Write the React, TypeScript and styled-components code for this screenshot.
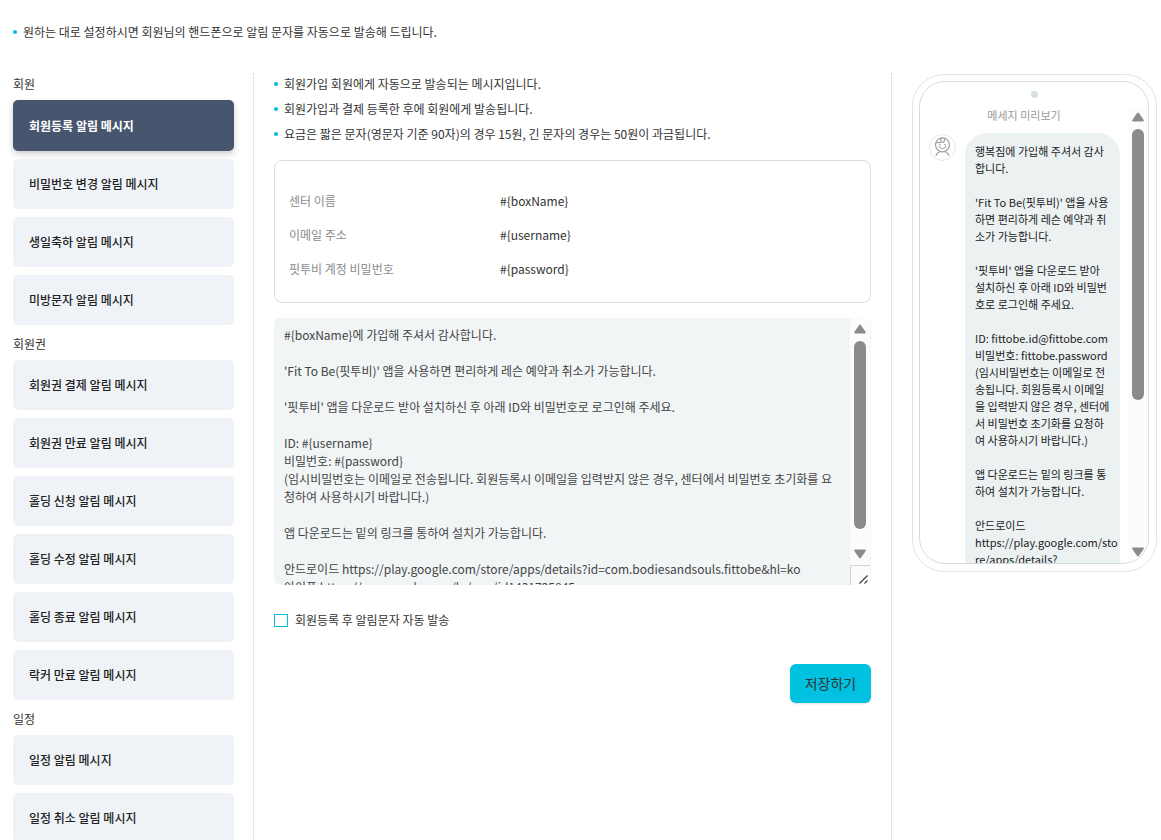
import React from 'react';
import styled, { createGlobalStyle, css } from 'styled-components';

const GlobalStyle = createGlobalStyle`
  * { box-sizing: border-box; }
  body {
    margin: 0;
    background: #fff;
    color: #333;
    font-family: 'Noto Sans CJK KR', 'Noto Sans', sans-serif;
    font-size: 12px;
    line-height: 18px;
  }
  button, input, textarea { font: inherit; color: inherit; }
`;

const Page = styled.main`
  height: 100vh;
  overflow: hidden;
  display: flex;
  flex-direction: column;
  padding: 23px 4px 0 13px;
`;

const Notes = styled.ul`
  list-style: none;
  margin: 0;
  padding: 0;
  display: flex;
  flex-direction: column;
  gap: 7px;
`;

const Note = styled.li`
  display: flex;
  align-items: center;
  gap: 6px;
  &::before {
    content: '';
    width: 4px;
    height: 4px;
    border-radius: 2px;
    background: #00bfdf;
  }
`;

const Columns = styled.div`
  flex: 1;
  min-height: 0;
  margin-top: 32px;
  display: grid;
  grid-template-columns: 241px minmax(0, 1fr) 265px;
`;

const Sidebar = styled.nav`
  padding-right: 19px;
  border-right: 1px dotted #d0d0d0;
`;

const Group = styled.section`
  display: flex;
  flex-direction: column;
  gap: 8px;
  padding-bottom: 8px;
`;

const GroupTitle = styled.h2`
  margin: 0 0 -3px;
  font-size: 12px;
  font-weight: 400;
  line-height: 22px;
`;

const MenuButton = styled.button<{ $active?: boolean }>`
  height: 50px;
  flex-shrink: 0;
  padding: 0 16px;
  border: 0;
  border-radius: 5px;
  background: #eff3f8;
  color: #222;
  font-weight: 500;
  text-align: left;
  cursor: pointer;
  ${(p) =>
    p.$active &&
    css`
      height: 51px;
      background: #47566e;
      color: #fff;
      font-weight: 700;
      box-shadow: 0 3px 6px rgba(0, 0, 0, 0.2);
    `}
`;

const Editor = styled.form`
  padding: 2px 20px 0;
  border-right: 1px dotted #d0d0d0;
  display: flex;
  flex-direction: column;
`;

const Variables = styled.dl`
  margin: 17px 0 15px;
  padding: 31px 14px 24px;
  border: 1px solid #d7e0e6;
  border-radius: 8px;
  display: grid;
  grid-template-columns: 211px 1fr;
  row-gap: 16px;
`;

const VariableName = styled.dt`
  color: #8c8c8c;
`;

const VariableValue = styled.dd`
  margin: 0;
`;

const MessageBox = styled.div`
  height: 267px;
  display: flex;
  border-radius: 6px;
  overflow: hidden;
  background: #f1f5f6;
  border-right: 1px solid #f1f5f6;
`;

const MessageInput = styled.textarea`
  flex: 1;
  min-width: 0;
  padding: 8px 10px 0;
  border: 0;
  outline: 0;
  resize: none;
  overflow: hidden;
  background: transparent;
  color: #444;
  line-height: 18px;
`;

const ScrollTrack = styled.div`
  width: 20px;
  flex-shrink: 0;
  display: flex;
  flex-direction: column;
  align-items: center;
  background: #fcfcfc;
`;

const ScrollThumb = styled.div<{ $length: number }>`
  width: 12px;
  height: ${(p) => p.$length}px;
  margin: 7px 0 auto;
  border-radius: 6px;
  background: #8b8b8b;
`;

const ScrollArrow = styled.svg`
  width: 12px;
  height: 10px;
  margin: 6px 0;
  flex-shrink: 0;
  fill: #8b8b8b;

  &:first-child {
    margin-bottom: 0;
  }
`;

const ResizeCorner = styled.svg`
  width: 20px;
  height: 20px;
  flex-shrink: 0;
`;

const CheckLabel = styled.label`
  margin-top: 26px;
  display: flex;
  align-items: center;
  gap: 7px;
`;

const Checkbox = styled.input`
  appearance: none;
  width: 14px;
  height: 13px;
  margin: 0;
  border: 1px solid #00bfdf;
  background: #fff;
`;

const SaveButton = styled.button`
  align-self: flex-end;
  width: 81px;
  height: 39px;
  margin-top: 35px;
  padding: 0 0 2px;
  border: 0;
  border-radius: 6px;
  background: #00c1e0;
  color: #333;
  font-size: 14px;
  box-shadow: 0 1px 2px rgba(0, 0, 0, 0.12);
  cursor: pointer;
`;

const PreviewColumn = styled.aside`
  padding: 1px 0 0 20px;
`;

const Phone = styled.div`
  height: 498px;
  padding: 6px 7px 7px 6px;
  border: 1px solid #dfe6e9;
  border-radius: 32px;
  display: flex;
`;

const Screen = styled.div`
  flex: 1;
  min-width: 0;
  border: 1px solid #d3dde1;
  border-radius: 26px;
  overflow: hidden;
  display: flex;
  flex-direction: column;
`;

const Camera = styled.div`
  width: 7px;
  height: 7px;
  margin: 9px auto 8px;
  flex-shrink: 0;
  border-radius: 50%;
  background: #d7e0e4;
`;

const ScreenBody = styled.div`
  flex: 1;
  min-height: 0;
  display: flex;
`;

const Conversation = styled.div`
  flex: 1;
  min-width: 0;
  overflow: hidden;
`;

const PreviewTitle = styled.h2`
  margin: 0 0 9px;
  color: #999;
  font-size: 11px;
  font-weight: 400;
  line-height: 18px;
  text-align: center;
`;

const MessageRow = styled.div`
  display: flex;
  align-items: flex-start;
  gap: 9px;
  padding: 0 8px 0 9px;
`;

const Avatar = styled.svg`
  width: 27px;
  height: 27px;
  margin-top: 1px;
  flex-shrink: 0;
`;

const Bubble = styled.p`
  flex: 1;
  min-width: 0;
  margin: 0;
  padding: 10px;
  border-radius: 22px;
  background: #ecf1f2;
  color: #222;
  font-size: 11px;
  line-height: 17px;
  white-space: pre-wrap;
  overflow-wrap: anywhere;
`;

const Address = styled.span`
  white-space: pre;
`;

const groups = [
  {
    title: '회원',
    items: ['회원등록 알림 메시지', '비밀번호 변경 알림 메시지', '생일축하 알림 메시지', '미방문자 알림 메시지'],
  },
  {
    title: '회원권',
    items: [
      '회원권 결제 알림 메시지',
      '회원권 만료 알림 메시지',
      '홀딩 신청 알림 메시지',
      '홀딩 수정 알림 메시지',
      '홀딩 종료 알림 메시지',
      '락커 만료 알림 메시지',
    ],
  },
  { title: '일정', items: ['일정 알림 메시지', '일정 취소 알림 메시지'] },
];

const variables = [
  ['센터 이름', '#{boxName}'],
  ['이메일 주소', '#{username}'],
  ['핏투비 계정 비밀번호', '#{password}'],
];

const buildMessage = (center: string, id: string, password: string) =>
  `${center}에 가입해 주셔서 감사합니다.

'Fit To Be(핏투비)' 앱을 사용하면 편리하게 레슨 예약과 취소가 가능합니다.

'핏투비' 앱을 다운로드 받아 설치하신 후 아래 ID와 비밀번호로 로그인해 주세요.

ID: ${id}
비밀번호: ${password}
(임시비밀번호는 이메일로 전송됩니다. 회원등록시 이메일을 입력받지 않은 경우, 센터에서 비밀번호 초기화를 요청하여 사용하시기 바랍니다.)

앱 다운로드는 밑의 링크를 통하여 설치가 가능합니다.

안드로이드`;

const links = ` https://play.google.com/store/apps/details?id=com.bodiesandsouls.fittobe&hl=ko
아이폰 https://apps.apple.com/kr/app/id1431725845`;

function ScrollBar({ length, children }: { length: number; children?: React.ReactNode }) {
  return (
    <ScrollTrack aria-hidden="true">
      <ScrollArrow viewBox="0 0 12 10">
        <path d="M5 1.2Q6 0 7 1.2L11.7 8Q12.2 9.5 11 9.5H1Q-.2 9.5.3 8Z" />
      </ScrollArrow>
      <ScrollThumb $length={length} />
      <ScrollArrow viewBox="0 0 12 10">
        <path d="M5 8.8Q6 10 7 8.8L11.7 2Q12.2.5 11 .5H1Q-.2.5.3 2Z" />
      </ScrollArrow>
      {children}
    </ScrollTrack>
  );
}

export default function App() {
  return (
    <>
      <GlobalStyle />
      <Page>
        <Notes>
          <Note>원하는 대로 설정하시면 회원님의 핸드폰으로 알림 문자를 자동으로 발송해 드립니다.</Note>
        </Notes>
        <Columns>
          <Sidebar>
            {groups.map((group, g) => (
              <Group key={group.title}>
                <GroupTitle>{group.title}</GroupTitle>
                {group.items.map((item, i) => (
                  <MenuButton key={item} type="button" $active={g === 0 && i === 0}>
                    {item}
                  </MenuButton>
                ))}
              </Group>
            ))}
          </Sidebar>

          <Editor onSubmit={(e) => e.preventDefault()}>
            <Notes>
              <Note>회원가입 회원에게 자동으로 발송되는 메시지입니다.</Note>
              <Note>회원가입과 결제 등록한 후에 회원에게 발송됩니다.</Note>
              <Note>요금은 짧은 문자(영문자 기준 90자)의 경우 15원, 긴 문자의 경우는 50원이 과금됩니다.</Note>
            </Notes>
            <Variables>
              {variables.map(([name, value]) => (
                <React.Fragment key={name}>
                  <VariableName>{name}</VariableName>
                  <VariableValue>{value}</VariableValue>
                </React.Fragment>
              ))}
            </Variables>
            <MessageBox>
              <MessageInput
                aria-label="메시지 내용"
                spellCheck={false}
                defaultValue={buildMessage('#{boxName}', '#{username}', '#{password}') + links}
              />
              <ScrollBar length={188}>
                <ResizeCorner viewBox="0 0 20 20" fill="none">
                  <path d="M.5 20V.5H20" stroke="#d5d5d5" />
                  <path d="M9.5 18.5l8-8M14.5 18.5l3-3" stroke="#444" strokeWidth="1.3" />
                </ResizeCorner>
              </ScrollBar>
            </MessageBox>
            <CheckLabel>
              <Checkbox type="checkbox" />
              회원등록 후 알림문자 자동 발송
            </CheckLabel>
            <SaveButton type="submit">저장하기</SaveButton>
          </Editor>

          <PreviewColumn>
            <Phone>
              <Screen>
                <Camera />
                <ScreenBody>
                  <Conversation>
                    <PreviewTitle>메세지 미리보기</PreviewTitle>
                    <MessageRow>
                      <Avatar viewBox="0 0 27 27" fill="none" stroke="#a0a0a0" strokeWidth="1.2" strokeLinecap="round">
                        <circle cx="13.5" cy="13.5" r="13" stroke="#e6e6e6" strokeWidth="1" />
                        <circle cx="13.5" cy="10.8" r="7" />
                        <path d="M10 12.5q3.5 4.5 7 0M7 21.5q1-3 4.5-4M20 21.5q-1-3-4.500-4M13 4q-2.500 2-.5 4.200 3 .3 3-2.500M7.500 8.500q3 .5 5-.5" />
                        <path d="M11 10.500v.3M16 10.500v.3" strokeWidth="1.6" />
                      </Avatar>
                      <Bubble>
                        {buildMessage('행복짐', 'fittobe.id@fittobe.com', 'fittobe.password')}
                        {'\n'}
                        <Address>{'https://play.google.com/sto\nre/apps/details?\nid=com.bodiesandsouls'}</Address>
                      </Bubble>
                    </MessageRow>
                  </Conversation>
                  <ScrollBar length={271} />
                </ScreenBody>
              </Screen>
            </Phone>
          </PreviewColumn>
        </Columns>
      </Page>
    </>
  );
}
